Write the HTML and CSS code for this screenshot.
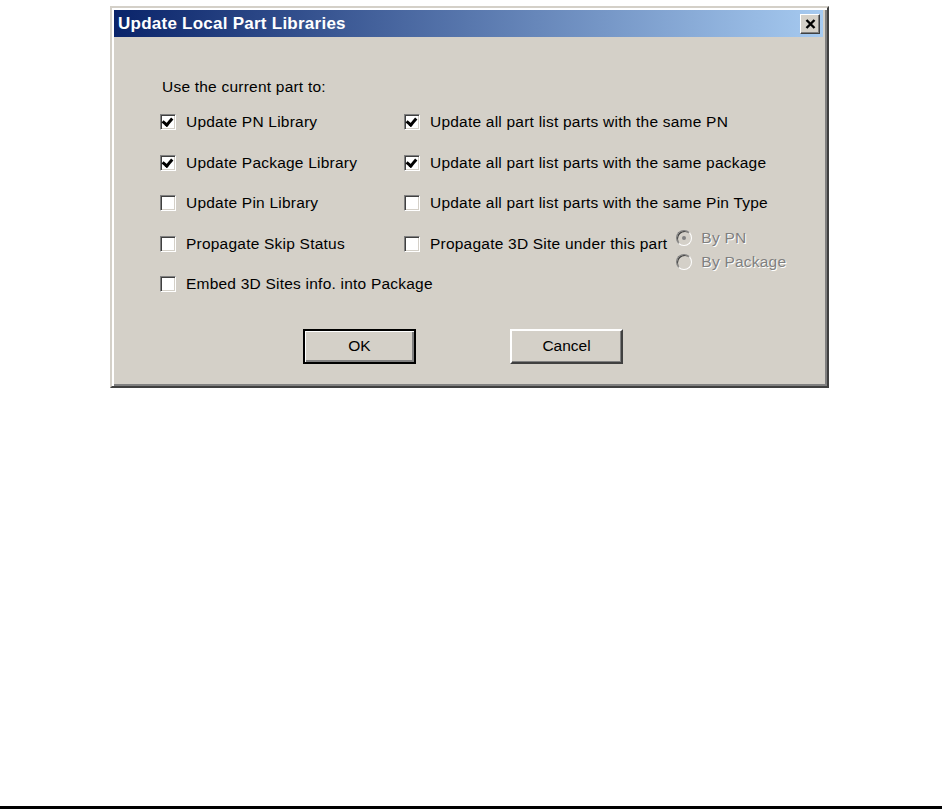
FILE: index.html
```html
<!DOCTYPE html>
<html lang="en">
  <head>
    <meta charset="UTF-8" />
    <title>Update Local Part Libraries</title>
    <link rel="stylesheet" href="styles.css">
  </head>
  <body>
    <div class="page">
      <div class="dialog">
        <div class="titlebar">
          <span class="title">Update Local Part Libraries</span>
          <button class="close" title="Close">
            <svg width="11" height="10" viewBox="0 0 11 10">
              <path d="M1.5 1 L9.5 9 M9.5 1 L1.5 9" stroke="#000" stroke-width="2.4" fill="none" />
            </svg>
          </button>
        </div>

        <div class="content">
          <p class="intro">Use the current part to:</p>

          <div class="options">
            <label class="opt"><span class="check on"></span>Update PN Library</label>
            <label class="opt"><span class="check on"></span>Update all part list parts with the same PN</label>

            <label class="opt"><span class="check on"></span>Update Package Library</label>
            <label class="opt"><span class="check on"></span>Update all part list parts with the same package</label>

            <label class="opt"><span class="check"></span>Update Pin Library</label>
            <label class="opt"><span class="check"></span>Update all part list parts with the same Pin Type</label>

            <label class="opt"><span class="check"></span>Propagate Skip Status</label>
            <div class="opt-wrap">
              <label class="opt"><span class="check"></span>Propagate 3D Site under this part</label>
              <div class="radios">
                <span class="radio-row"><span class="radio on"></span>By PN</span>
                <span class="radio-row"><span class="radio"></span>By Package</span>
              </div>
            </div>

            <label class="opt wide"><span class="check"></span>Embed 3D Sites info. into Package</label>
          </div>

          <div class="buttons">
            <button class="btn default">OK</button>
            <button class="btn">Cancel</button>
          </div>
        </div>
      </div>
    </div>

    <div class="bottom-rule"></div>
  </body>
</html>
```

FILE: styles.css
```css
body {
  font-family: "Liberation Sans", Arial, sans-serif;
  margin: 0;
  min-height: 100vh;
  display: flex;
  flex-direction: column;
  background: #fff;
  color: #000;
}

.page {
  padding: 6px 0 0 110px;
}

.dialog {
  width: 719px;
  height: 382px;
  box-sizing: border-box;
  background: #d4d0c8;
  border: 2px solid;
  border-color: #d4d0c8 #404040 #404040 #d4d0c8;
  box-shadow: inset 2px 2px #fff, inset -2px -2px #808080;
  padding: 2px 4px 4px 2px;
  display: flex;
  flex-direction: column;
}

.titlebar {
  height: 27px;
  display: flex;
  align-items: center;
  justify-content: space-between;
  background: linear-gradient(to right, #0a246a, #a6caf0);
  padding: 0 3px 0 4px;
}

.title {
  color: #fff;
  font-weight: bold;
  font-size: 17px;
  letter-spacing: 0.25px;
}

.close {
  width: 20px;
  height: 20px;
  padding: 0;
  display: flex;
  align-items: center;
  justify-content: center;
  background: #d4d0c8;
  border: 1px solid;
  border-color: #fff #404040 #404040 #fff;
  box-shadow: inset -1px -1px #808080;
}

.content {
  padding: 0 0 0 46px;
  letter-spacing: 0.22px;
}

.intro {
  margin: 0;
  padding-top: 41px;
  height: 18px;
  line-height: 18px;
  font-size: 15.5px;
  padding-left: 2px;
}

.options {
  display: grid;
  grid-template-columns: 244px auto;
  grid-auto-rows: 40.5px;
  margin-top: 6px;
  font-size: 15.5px;
}

.opt {
  display: flex;
  align-items: center;
  gap: 10px;
  white-space: nowrap;
}

.opt.wide {
  grid-column: 1 / 3;
}

.opt-wrap {
  display: flex;
  align-items: center;
  gap: 9px;
}

.check {
  width: 16px;
  height: 16px;
  box-sizing: border-box;
  background: #fff;
  border: 1px solid;
  border-color: #808080 #fff #fff #808080;
  box-shadow: inset 1px 1px #404040, inset -1px -1px #d4d0c8;
  flex: none;
  position: relative;
}

.check.on::after {
  content: "";
  position: absolute;
  left: 3px;
  top: 1px;
  width: 4px;
  height: 7px;
  border: solid #000;
  border-width: 0 3px 3px 0;
  transform: rotate(40deg);
}

.radios {
  display: flex;
  flex-direction: column;
  margin-top: 12px;
  color: #808080;
  text-shadow: 1px 1px #fff;
}

.radio-row {
  display: flex;
  align-items: center;
  gap: 9px;
  height: 24px;
}

.radio {
  width: 16px;
  height: 16px;
  box-sizing: border-box;
  border-radius: 50%;
  border: 1px solid;
  border-color: #808080 #fff #fff #808080;
  box-shadow: inset 1px 1px #404040, inset -1px -1px #d4d0c8;
  background: #d4d0c8;
  position: relative;
  flex: none;
}

.radio.on::after {
  content: "";
  position: absolute;
  left: 5px;
  top: 5px;
  width: 4px;
  height: 4px;
  border-radius: 50%;
  background: #808080;
}

.buttons {
  display: flex;
  gap: 94px;
  padding: 24px 0 0 143px;
}

.btn {
  width: 113px;
  height: 35px;
  font-family: "Liberation Sans", Arial, sans-serif;
  font-size: 15.5px;
  color: #000;
  background: #d4d0c8;
  border: 2px solid;
  border-color: #fff #404040 #404040 #fff;
  box-shadow: inset -1px -1px #808080;
  padding: 0;
}

.btn.default {
  border: 2px solid #000;
  box-shadow: inset 1px 1px #fff, inset -2px -2px #808080;
}

.bottom-rule {
  margin-top: auto;
  height: 3px;
  background: #000;
}
```
